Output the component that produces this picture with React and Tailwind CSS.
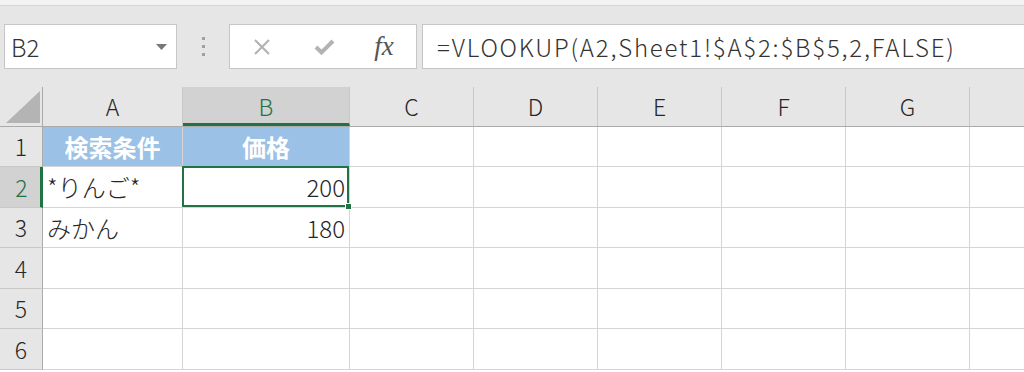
import React from "react";

const COLS = [
  { key: "A", w: "w-[140px]" },
  { key: "B", w: "w-[167px]" },
  { key: "C", w: "w-[124px]" },
  { key: "D", w: "w-[124px]" },
  { key: "E", w: "w-[124px]" },
  { key: "F", w: "w-[124px]" },
  { key: "G", w: "w-[124px]" },
];

const ROWS = [
  { n: 1, h: "h-[40px]" },
  { n: 2, h: "h-[41px]" },
  { n: 3, h: "h-[40px]" },
  { n: 4, h: "h-[41px]" },
  { n: 5, h: "h-[40px]" },
  { n: 6, h: "h-[41px]" },
];

const font = { fontFamily: '"Noto Sans CJK JP", "Noto Sans", sans-serif' };

const cellValue = (row, col) => {
  if (row === 1 && col === "A") return "検索条件";
  if (row === 1 && col === "B") return "価格";
  if (row === 2 && col === "A") return "*りんご*";
  if (row === 2 && col === "B") return "200";
  if (row === 3 && col === "A") return "みかん";
  if (row === 3 && col === "B") return "180";
  return "";
};

const Cell = ({ row, col, w }) => {
  const value = cellValue(row, col);
  const isHeader = row === 1 && (col === "A" || col === "B");
  const isNum = col === "B" && row > 1;
  const selected = row === 2 && col === "B";

  return (
    <div
      className={`relative shrink-0 h-full flex items-center border-r border-b border-[#d4d4d4] ${w} ${
        isHeader ? "bg-[#9bc2e6] justify-center text-white" : "bg-white text-[#262626]"
      } ${isNum ? "justify-end pr-[4px]" : ""} ${!isHeader && !isNum ? "pl-[4px]" : ""} ${selected ? "z-10" : ""}`}
    >
      <span className={`text-[24px] leading-none ${isHeader ? "font-bold" : "font-light"}`}>{value}</span>
      {selected && (
        <>
          <div className="absolute -left-[1px] -top-[1px] right-0 bottom-0 border-2 border-[#217346]" />
          <div className="absolute -right-[3px] -bottom-[3px] w-[7px] h-[7px] bg-[#217346] border border-white" />
        </>
      )}
    </div>
  );
};

export default function App() {
  return (
    <div className="w-[1024px] h-[372px] overflow-hidden bg-white text-[#262626]" style={font}>
      {/* title strip */}
      <div className="h-[6px] bg-[#f3f3f3] border-b border-[#d6d6d6]" />

      {/* formula bar */}
      <div className="h-[81px] bg-[#e6e6e6] flex items-start pt-[18px] pl-[4px]">
        <div className="w-[173px] h-[45px] bg-white border border-[#c6c6c6] flex items-center justify-between pl-[6px] pr-[9px]">
          <span className="text-[24px] text-[#333] leading-none font-light">B2</span>
          <svg width="11" height="6" viewBox="0 0 11 6">
            <path d="M0 0 L11 0 L5.5 6 Z" fill="#777" />
          </svg>
        </div>
        <div className="w-[52px] h-[45px] flex flex-col items-center justify-center gap-[5px]">
          <div className="w-[3px] h-[3px] bg-[#a0a0a0]" />
          <div className="w-[3px] h-[3px] bg-[#a0a0a0]" />
          <div className="w-[3px] h-[3px] bg-[#a0a0a0]" />
        </div>
        <div className="w-[188px] h-[45px] bg-white border border-[#c6c6c6] flex items-center">
          <div className="w-[64px] flex justify-center">
            <svg width="18" height="18" viewBox="0 0 18 18">
              <path d="M2 2 L16 16 M16 2 L2 16" stroke="#b3b3b3" strokeWidth="2.2" />
            </svg>
          </div>
          <div className="w-[60px] flex justify-center">
            <svg width="22" height="18" viewBox="0 0 22 18">
              <path d="M3 9 L8.5 14.5 L20 3" stroke="#b3b3b3" strokeWidth="4" fill="none" />
            </svg>
          </div>
          <div className="w-[60px] flex justify-center">
            <span
              className="text-[27px] italic text-[#555] leading-none"
              style={{ fontFamily: '"Liberation Serif", serif' }}
            >
              fx
            </span>
          </div>
        </div>
        <div className="ml-[5px] flex-1 h-[45px] bg-white border border-[#c6c6c6] border-r-0 flex items-center pl-[14px]">
          <span className="text-[24px] text-[#333] leading-none font-light tracking-[1.8px]">
            =VLOOKUP(A2,Sheet1!$A$2:$B$5,2,FALSE)
          </span>
        </div>
      </div>

      {/* column headers */}
      <div className="flex h-[40px] bg-[#e6e6e6] border-b border-[#ababab]">
        <div className="w-[43px] shrink-0 h-full border-r border-[#ababab] flex items-end justify-end pr-[2px] pb-[3px]">
          <svg width="34" height="32" viewBox="0 0 34 32">
            <path d="M34 0 L34 32 L0 32 Z" fill="#b4b4b4" />
          </svg>
        </div>
        {COLS.map((c) => (
          <div
            key={c.key}
            className={`${c.w} shrink-0 h-full flex items-center justify-center border-r border-[#c8c8c8] text-[23px] font-light ${
              c.key === "B"
                ? "bg-[#d2d2d2] text-[#217346] border-b-[3px] border-b-[#217346] pt-[3px]"
                : "text-[#262626]"
            }`}
          >
            {c.key}
          </div>
        ))}
        <div className="flex-1" />
      </div>

      {/* rows */}
      {ROWS.map((r) => (
        <div key={r.n} className={`flex ${r.h}`}>
          <div
            className={`w-[43px] shrink-0 h-full flex items-center justify-center border-b text-[23px] font-light ${
              r.n === 2
                ? "bg-[#d2d2d2] text-[#217346] border-r-[3px] border-r-[#217346] border-b-[#c8c8c8] pl-[3px]"
                : "bg-[#e6e6e6] text-[#262626] border-r border-r-[#ababab] border-b-[#c8c8c8]"
            }`}
          >
            {r.n}
          </div>
          {COLS.map((c) => (
            <Cell key={c.key} row={r.n} col={c.key} w={c.w} />
          ))}
          <div className="flex-1 h-full border-b border-[#d4d4d4] bg-white" />
        </div>
      ))}
    </div>
  );
}
